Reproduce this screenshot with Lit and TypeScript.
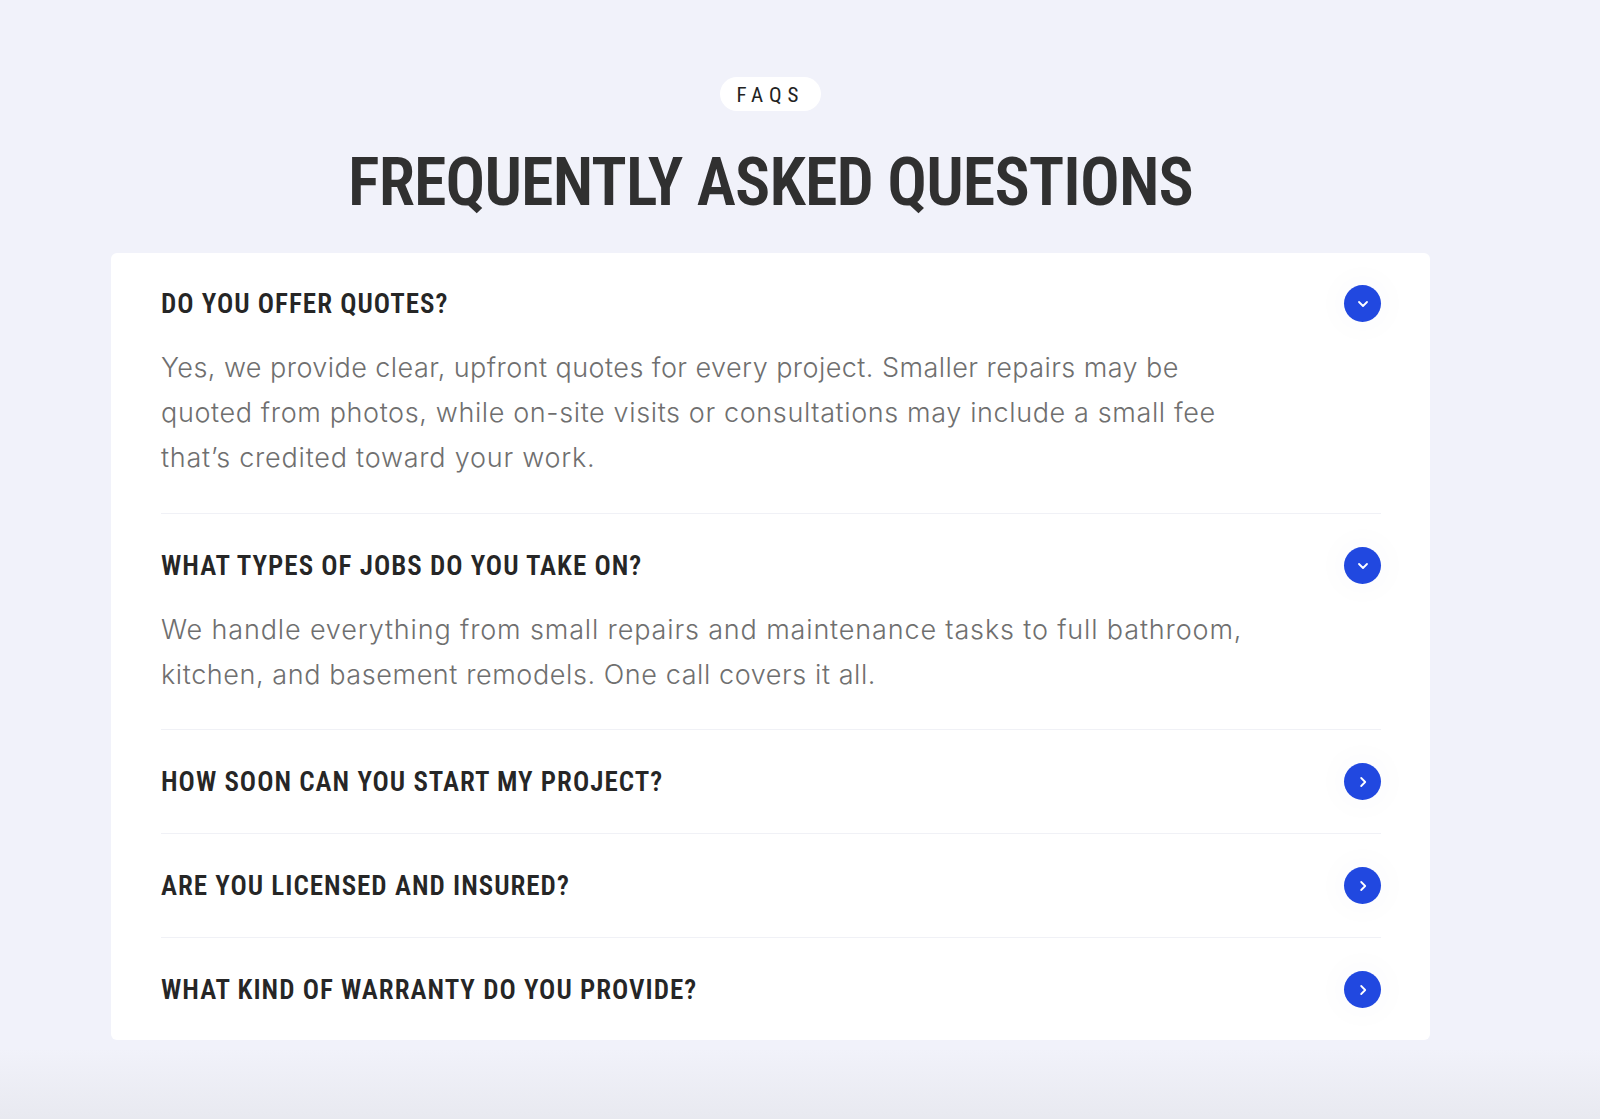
import { LitElement, html, css } from "lit";
import { customElement } from "lit/decorators.js";

const items = [
  { q: "DO YOU OFFER QUOTES?", open: true, a: [["Yes, we provide clear, upfront quotes for every project. Smaller repairs may be", 0.44], ["quoted from photos, while on-site visits or consultations may include a small fee", 0.62], ["that’s credited toward your work.", 0.77]] },
  { q: "WHAT TYPES OF JOBS DO YOU TAKE ON?", open: true, a: [["We handle everything from small repairs and maintenance tasks to full bathroom,", 0.85], ["kitchen, and basement remodels. One call covers it all.", 0.58]] },
  { q: "HOW SOON CAN YOU START MY PROJECT?", open: false, a: [] },
  { q: "ARE YOU LICENSED AND INSURED?", open: false, a: [] },
  { q: "WHAT KIND OF WARRANTY DO YOU PROVIDE?", open: false, a: [] },
];

@customElement("app-root")
export class AppRoot extends LitElement {
  static styles = css`
    :host { display: block; height: 1119px; overflow: hidden; background: #f1f2fa; position: relative; }
    .shade { position: absolute; left: 0; right: 0; bottom: 0; height: 70px; background: linear-gradient(to bottom, rgba(232,233,240,0), #e8e9f0); }
    .section { display: flex; flex-direction: column; align-items: center; padding: 77px 59px 0 0; }
    .pill { width: 101px; height: 34px; border-radius: 17px; background: #fff; display: flex; align-items: center; justify-content: center; padding-top: 2px; box-sizing: border-box; font: 400 21px/32px Roboto, sans-serif; font-stretch: 75%; letter-spacing: 6px; color: #222; }
    h1 { margin: 36px 0 0; height: 106px; font: 600 66px/72px Roboto, sans-serif; font-stretch: 75%; letter-spacing: -0.9px; color: #303030; white-space: nowrap; }
    .card { width: 1220px; padding: 0 49px 0 50px; background: #fff; border-radius: 6px; }
    .item { border-bottom: 1px solid #f0f1f6; }
    .item:first-child .head { padding-top: 32px; }
    .item:first-child .a { padding-bottom: 33px; }
    .item:last-child { border-bottom: 0; }
    .item:last-child .head { padding-bottom: 32px; }
    .head { display: flex; align-items: center; justify-content: space-between; padding: 33px 0; height: 37px; }
    .item.open .head { padding-bottom: 23px; }
    .q { padding-top: 1px; font: 600 27px/37px Roboto, sans-serif; font-stretch: 75%; color: #262626; letter-spacing: 1px; white-space: nowrap; }
    .btn { width: 37px; height: 37px; border-radius: 50%; background: #2148e0; display: flex; align-items: center; justify-content: center; box-shadow: 0 0 0 9px #fdfdfe, 0 0 0 18px #fefefe; }
    .a { padding-bottom: 32px; font: 300 27px/45px Inter, sans-serif; color: #6f6f6f; white-space: nowrap; }
    .a div { height: 45px; }
    svg { display: block; }
  `;
  render() {
    return html`<div class="section">
      <div class="pill">FAQS</div>
      <h1>FREQUENTLY ASKED QUESTIONS</h1>
      <div class="card">
        ${items.map((it) => html`<div class="item ${it.open ? "open" : ""}">
          <div class="head"><span class="q">${it.q}</span>
            <span class="btn"><svg width="14" height="14" viewBox="0 0 14 14" fill="none" stroke="#fff" stroke-width="1.8" stroke-linecap="round" stroke-linejoin="round">
              <path d="${it.open ? "M3 5l4 4 4-4" : "M5.2 3l4 4-4 4"}"></path></svg></span></div>
          ${it.open ? html`<div class="a">${it.a.map((l) => html`<div style="letter-spacing:${l[1]}px">${l[0]}</div>`)}</div>` : ""}
        </div>`)}
      </div>
    </div><div class="shade"></div>`;
  }
}
